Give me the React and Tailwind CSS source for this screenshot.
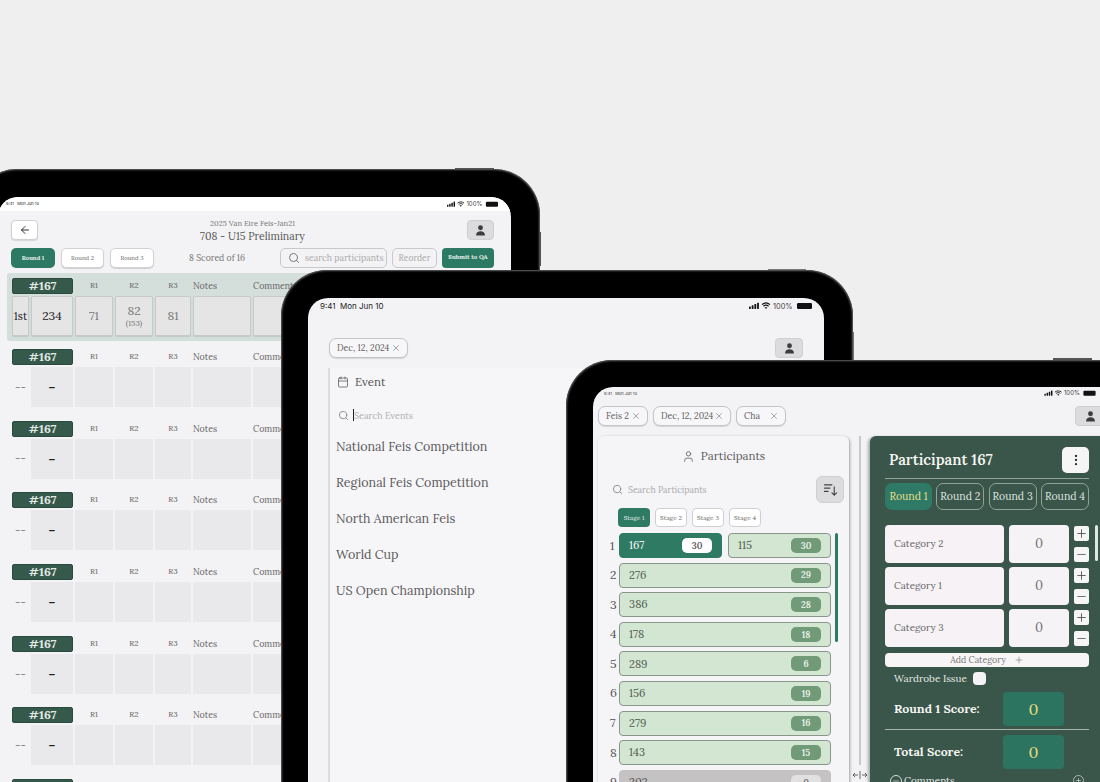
import { ArrowLeft, Calendar, EllipsisVertical, Minus, Plus, Search, User, X } from "lucide-react";

const SERIF = "font-['Lora','Liberation_Serif',serif]";
const SANS = "font-['Inter','Liberation_Sans',sans-serif]";

const EVENTS = [
  "National Feis Competition",
  "Regional Feis Competition",
  "North American Feis",
  "World Cup",
  "US Open Championship",
];

const PARTICIPANTS = [
  [276, 29],
  [386, 28],
  [178, 18],
  [289, 6],
  [156, 19],
  [279, 16],
  [143, 15],
];

function SolidUser({ className }) {
  return (
    <svg viewBox="0 0 16 16" className={className} fill="currentColor">
      <circle cx="8" cy="4.6" r="3" />
      <path d="M2.5 14c0-3.2 2.4-5 5.5-5s5.5 1.8 5.5 5z" />
    </svg>
  );
}

// signal, wifi, 100%, battery. size is set by the caller
function StatusIcons({ className }) {
  return (
    <svg viewBox="0 0 63 8" className={className} fill="#111">
      <rect x="0" y="4.500" width="1.800" height="2.500" rx="0.400" />
      <rect x="2.700" y="3.300" width="1.800" height="3.700" rx="0.400" />
      <rect x="5.400" y="2" width="1.800" height="5" rx="0.400" />
      <rect x="8.100" y="0.700" width="1.800" height="6.300" rx="0.400" />
      <path d="M13 2.600c2.400-2 5.600-2 8 0M14.400 4.200c1.600-1.300 3.600-1.300 5.200 0" fill="none" stroke="#111" strokeWidth="1.100" />
      <path d="M17 7l-1.300-1.500c.8-.5 1.800-.5 2.600 0z" />
      <text x="24" y="6.700" fontSize="7.400" fill="#444" fontFamily="Inter, sans-serif">100%</text>
      <rect x="48" y="1" width="15" height="6" rx="1.200" />
    </svg>
  );
}

function Chip({ label, wide }) {
  return (
    <div className={`flex h-5 items-center justify-between whitespace-nowrap rounded-[7px] border border-[#c4c4c8] bg-[#f7f6f8] pl-[7px] pr-[6px] text-[8.800px] text-[#5f5f5f] shadow-[0_1px_1px_rgba(0,0,0,0.12)] ${wide}`}>
      <span>{label}</span>
      <X className="h-[10px] w-[10px] text-[#77777c]" strokeWidth={1.500} />
    </div>
  );
}

function AvatarButton({ className }) {
  return (
    <div className={`flex h-5 shrink-0 items-center justify-center rounded-[4px] border border-[#cfcfd1] bg-[#dcdbde] text-[#3c3c3c] ${className}`}>
      <SolidUser className="h-[13px] w-[13px]" />
    </div>
  );
}

function ScoreGrid({ highlighted, first }) {
  const cell = highlighted
    ? "rounded-[2px] border border-[#c6cbc8] bg-[#e6e5e6] shadow-[0_1px_1px_rgba(0,0,0,0.1)]"
    : "bg-[#e9e8ea]";
  return (
    <div className="grid grid-cols-[17px_42px_38px_38px_36px_58px_60px] gap-x-[2px]">
      <div className="col-span-2 flex h-[16px] items-center justify-center rounded-[2px] border border-[#2a4a3d] bg-[#35594b] text-[12px] font-bold text-[#e3e9e4]">
        #167
      </div>
      <div className="text-center text-[8px] leading-[15px] text-[#666]">R1</div>
      <div className="text-center text-[8px] leading-[15px] text-[#666]">R2</div>
      <div className="text-center text-[8px] leading-[15px] text-[#666]">R3</div>
      <div className="text-[8.800px] leading-[15px] text-[#666]">Notes</div>
      <div className="whitespace-nowrap text-[8.800px] leading-[15px] text-[#666]">Comments</div>
      <div className={`mt-[2px] flex h-10 items-center justify-center text-[11px] ${first ? `${cell} text-[#222]` : "text-[#777]"}`}>
        {first ? "1st" : "--"}
      </div>
      <div className={`mt-[2px] flex h-10 items-center justify-center text-[12px] ${cell} ${first ? "text-[#222]" : "font-bold text-[#222]"}`}>
        {first ? "234" : "–"}
      </div>
      <div className={`mt-[2px] flex h-10 items-center justify-center text-[12px] text-[#777] ${cell}`}>{first ? "71" : ""}</div>
      <div className={`mt-[2px] flex h-10 flex-col items-center justify-center text-[12px] leading-[14px] text-[#777] ${cell}`}>
        {first ? "82" : ""}
        {first && <span className="text-[8px] leading-[10px]">(153)</span>}
      </div>
      <div className={`mt-[2px] flex h-10 items-center justify-center text-[12px] text-[#777] ${cell}`}>{first ? "81" : ""}</div>
      <div className={`mt-[2px] h-10 ${cell}`} />
      <div className={`mt-[2px] h-10 ${cell}`} />
    </div>
  );
}

function ScoresScreen() {
  const tabClass = "flex h-5 items-center justify-center rounded-[5px] border border-[#d2d2d4] bg-white text-[6px] text-[#666] shadow-[0_1px_1px_rgba(0,0,0,0.15)]";
  return (
    <div className={`h-full overflow-hidden rounded-t-[20px] bg-[#f3f2f4] ${SERIF}`}>
      <div className={`flex h-[14px] items-center justify-between bg-white pl-[8px] pr-[13px] text-[4px] text-[#222] ${SANS}`}>
        <span>9:41&nbsp;&nbsp;&nbsp;Mon Jun 10</span>
        <StatusIcons className="h-[6.500px] w-[51px]" />
      </div>
      <div className="pl-[13px] pr-[17px]">
        <div className="mt-[9px] flex h-5 items-start">
          <div className="flex h-5 w-[27px] items-center justify-center rounded-[4px] border border-[#d0d0d2] bg-white text-[#333] shadow-[0_1px_1px_rgba(0,0,0,0.12)]">
            <ArrowLeft className="h-[12px] w-[12px]" />
          </div>
          <div className="-mt-[2px] flex-1 text-center">
            <div className="text-[7.500px] leading-[10px] text-[#777]">2025 Van Eire Feis-Jan21</div>
            <div className="mt-[1px] text-[10.500px] leading-[15px] text-[#555]">708 - U15 Preliminary</div>
          </div>
          <AvatarButton className="w-[27px]" />
        </div>
        <div className="mt-[8px] flex h-5 items-center whitespace-nowrap">
          <div className="flex h-5 w-[44px] items-center justify-center rounded-[5px] bg-[#2c7a63] text-[6px] font-bold text-[#e6f0ea]">Round 1</div>
          <div className={`ml-[6px] w-[43px] ${tabClass}`}>Round 2</div>
          <div className={`ml-[6px] w-[44px] ${tabClass}`}>Round 3</div>
          <span className="ml-[35px] text-[8.700px] text-[#777]">8 Scored of 16</span>
          <div className="ml-auto flex h-5 w-[107px] items-center rounded-[5px] border border-[#c8c8cb] pl-[7px] text-[8.800px] text-[#aaa]">
            <Search className="mr-[5px] h-[12px] w-[12px] text-[#777]" />
            <span>search participants</span>
          </div>
          <div className="ml-[5px] flex h-5 w-[45px] items-center justify-center rounded-[5px] border border-[#c8c8cb] text-[8.500px] text-[#aaa]">Reorder</div>
          <div className="ml-[5px] flex h-5 w-[52px] items-center justify-center rounded-[4px] bg-[#2c7a63] text-[6.200px] font-bold text-[#e6f0ea]">Submit to QA</div>
        </div>
        <div className="-ml-[4px] mt-[5px] rounded-[3px] bg-[#d4dedb] py-[5px] pl-[5px]">
          <ScoreGrid highlighted first />
        </div>
        <div className="mt-[8px] flex flex-col gap-y-[13.700px] pl-px">
          {[0, 1, 2, 3, 4, 5, 6].map((n) => (
            <ScoreGrid key={n} />
          ))}
        </div>
      </div>
    </div>
  );
}

function EventScreen() {
  return (
    <div className={`h-full overflow-hidden rounded-t-[20px] bg-[#f3f2f5] ${SERIF}`}>
      <div className={`flex h-[15px] items-center justify-between pl-[12px] pr-[12px] pt-[1px] text-[8px] text-[#222] ${SANS}`}>
        <span>9:41&nbsp;&nbsp;Mon Jun 10</span>
        <StatusIcons className="h-[8px] w-[63px]" />
      </div>
      <div className="mt-[25px] flex items-center justify-between pl-[21px] pr-[21px]">
        <Chip label="Dec, 12, 2024" wide="w-[79px]" />
        <AvatarButton className="w-[28px]" />
      </div>
      <div className="ml-[20px] mt-[10px] h-[500px] border-l-2 border-[#dcdbde] bg-[#f6f5f8] pl-[7px]">
        <div className="flex items-center pt-[5px] text-[#555]">
          <Calendar className="h-[12px] w-[12px]" strokeWidth={1.500} />
          <span className="ml-[6px] text-[11.500px]">Event</span>
        </div>
        <div className="mt-[18px] flex h-[14px] items-center text-[9px] text-[#b0b0b2]">
          <Search className="ml-px h-[11px] w-[11px] text-[#8a8a8d]" />
          <span className="ml-[4px] h-[12px] w-px bg-[#222]" />
          <span>Search Events</span>
        </div>
        <div className="-ml-px mt-[6px] flex flex-col">
          {EVENTS.map((name) => (
            <div key={name} className="h-9 text-[12.500px] leading-[36px] text-[#5a5a5a]">
              {name}
            </div>
          ))}
        </div>
      </div>
    </div>
  );
}

function ParticipantCard({ id, score, active, grey, className }) {
  const box = active
    ? "bg-[#2f7a63] border-[#2f7a63] text-white"
    : grey
      ? "bg-[#c4c2c3] border-[#c4c2c3] text-[#555]"
      : "bg-[#d3e6d2] border-[#8a958c] text-[#4f5a50]";
  const pill = active
    ? "bg-white text-[#555] font-normal"
    : grey
      ? "bg-[#e2e1e2] text-[#666]"
      : "bg-[#709a78] text-[#eef5ec]";
  return (
    <div className={`flex h-[25px] items-center justify-between rounded-[4px] border pl-[9px] pr-[9px] text-[11px] ${box} ${className}`}>
      <span>{id}</span>
      <span className={`flex h-[15px] w-[30px] items-center justify-center rounded-[5px] text-[9px] font-semibold ${pill}`}>{score}</span>
    </div>
  );
}

function CategoryRow({ name }) {
  return (
    <div className="flex h-[38px] gap-x-[5px]">
      <div className="flex w-[119px] items-center rounded-[4px] bg-[#f7f2f5] pl-[9px] text-[9.800px] text-[#666]">{name}</div>
      <div className="flex w-[60px] items-center justify-center rounded-[4px] bg-[#f5f3f5] text-[13px] text-[#777]">0</div>
      <div className="flex flex-col justify-between py-[1px]">
        <div className="flex h-[15px] w-[15px] items-center justify-center rounded-[2px] bg-[#f7f6f7] text-[#444]">
          <Plus className="h-[13px] w-[13px]" strokeWidth={1.500} />
        </div>
        <div className="flex h-[15px] w-[15px] items-center justify-center rounded-[2px] bg-[#f7f6f7] text-[#555]">
          <Minus className="h-[13px] w-[13px]" strokeWidth={1.500} />
        </div>
      </div>
    </div>
  );
}

function ScoringPanel() {
  const round = "flex h-[27px] w-[48px] items-center justify-center rounded-[7px] border border-[#8fa398] text-[10.500px] text-[#dfe6e0]";
  return (
    <div className="relative h-[400px] w-[260px] rounded-[6px] bg-[#3a5549] pl-[15px] shadow-[-2px_1px_3px_rgba(0,0,0,0.3)]">
      <div className="flex h-[42px] w-[204px] items-center justify-between pl-[4px] pt-[6px]">
        <span className="text-[14.800px] font-semibold text-[#f4f5f2]">Participant 167</span>
        <div className="flex h-[26px] w-[27px] items-center justify-center rounded-[5px] bg-[#f6f5f6] text-[#333]">
          <EllipsisVertical className="h-[14px] w-[14px]" />
        </div>
      </div>
      <div className="h-px w-[204px] bg-[#8fa398]" />
      <div className="mt-[4px] flex w-[204px] justify-between">
        <div className="flex h-[27px] w-[47px] items-center justify-center rounded-[7px] bg-[#2f7a66] text-[10.500px] text-[#eadf86]">Round 1</div>
        <div className={round}>Round 2</div>
        <div className={round}>Round 3</div>
        <div className={round}>Round 4</div>
      </div>
      <div className="mt-[15px] flex flex-col gap-y-[4px]">
        <CategoryRow name="Category 2" />
        <CategoryRow name="Category 1" />
        <CategoryRow name="Category 3" />
      </div>
      <div className="mt-[6px] flex h-[14px] w-[204px] items-center justify-center rounded-[4px] bg-[#f8f5f7] text-[8.800px] text-[#777]">
        Add Category
        <Plus className="ml-[8px] h-[10px] w-[10px]" strokeWidth={1.500} />
      </div>
      <div className="mt-[4px] flex h-[14px] items-center pl-[9px] text-[10px] text-[#e4e9e4]">
        Wardrobe Issue
        <span className="ml-[6px] h-[13px] w-[13px] rounded-[4px] bg-[#f4f2f5]" />
      </div>
      <div className="mt-[7px] flex h-[34px] w-[179px] items-center justify-between">
        <span className="pl-[9px] text-[12.300px] font-bold text-[#f2f4f0]">Round 1 Score:</span>
        <span className="flex h-[34px] w-[61px] items-center justify-center rounded-[4px] bg-[#2c7460] text-[16px] text-[#e3d97c]">0</span>
      </div>
      <div className="mt-[3px] h-px w-[204px] bg-[#a5b5ab]" />
      <div className="mt-[5px] flex h-[34px] w-[179px] items-center justify-between">
        <span className="pl-[9px] text-[12.300px] font-bold text-[#f2f4f0]">Total Score:</span>
        <span className="flex h-[34px] w-[61px] items-center justify-center rounded-[4px] bg-[#2c7460] text-[16px] text-[#e3d97c]">0</span>
      </div>
      <div className="mt-[4px] flex w-[199px] items-center justify-between pl-[5px] text-[10px] text-[#e4e9e4]">
        <span className="flex items-center gap-x-[2px]">
          <span className="flex h-[12px] w-[12px] items-center justify-center rounded-full border border-[#d5ddd7]">
            <Minus className="h-[8px] w-[8px]" />
          </span>
          Comments
        </span>
        <span className="flex h-[11px] w-[11px] items-center justify-center rounded-full border border-[#a9b7ae]">
          <Plus className="h-[7px] w-[7px]" />
        </span>
      </div>
      <div className="absolute left-[225px] top-[89px] h-[36px] w-[3px] rounded-full bg-[#dfe9e1]" />
    </div>
  );
}

function ParticipantsScreen() {
  const stage = "flex h-[19px] w-[32px] items-center justify-center rounded-[4px] border border-[#cfcfd3] bg-white text-[6.500px] text-[#666]";
  return (
    <div className={`h-full overflow-hidden rounded-t-[20px] bg-[#f3f2f5] ${SERIF}`}>
      <div className={`flex h-[14px] items-center justify-between pl-[11px] pr-[4px] text-[4px] text-[#333] ${SANS}`}>
        <span>9:41&nbsp;&nbsp;&nbsp;Mon Jun 10</span>
      </div>
      <div className="mt-[5px] flex items-center gap-x-[5px] pl-[5px]">
        <Chip label="Feis 2" wide="w-[50px]" />
        <Chip label="Dec, 12, 2024" wide="w-[78px]" />
        <Chip label="Cha" wide="w-[50px]" />
        <AvatarButton className="ml-[284px] w-[30px]" />
      </div>
      <div className="mt-[10px] flex items-start pl-[5px]">
        <div className="h-[400px] w-[251px] rounded-[6px] bg-[#f5f4f7] shadow-[1px_1px_3px_rgba(0,0,0,0.35)]">
          <div className="flex h-[40px] items-center justify-center text-[11.500px] text-[#5c5c5c]">
            <User className="mr-[6px] h-[13px] w-[13px]" strokeWidth={1.500} />
            Participants
          </div>
          <div className="flex items-center pl-[14px] pr-[5px]">
            <Search className="h-[11px] w-[11px] text-[#8a8a8d]" />
            <span className="ml-[5px] text-[8.700px] text-[#aaa]">Search Participants</span>
            <div className="ml-auto flex h-[27px] w-[28px] items-center justify-center rounded-[6px] border border-[#cfcfd2] bg-[#dcdbde] text-[#444]">
              <svg viewBox="0 0 16 16" className="h-[15px] w-[15px]" fill="none" stroke="currentColor" strokeWidth="1.200" strokeLinecap="round" strokeLinejoin="round">
                <path d="M1.500 3h8M1.500 6.500h6M1.500 10h4" />
                <path d="M12 5v9M9.500 11.500L12 14l2.500-2.500" />
              </svg>
            </div>
          </div>
          <div className="mt-[5px] flex gap-x-[5px] pl-[20px]">
            <div className="flex h-[19px] w-[32px] items-center justify-center rounded-[4px] bg-[#2f7a63] text-[6.500px] text-[#e6f0ea]">Stage 1</div>
            <div className={stage}>Stage 2</div>
            <div className={stage}>Stage 3</div>
            <div className={stage}>Stage 4</div>
          </div>
          <div className="relative mt-[6px] flex flex-col gap-y-[4.600px] pl-[12px]">
            <div className="flex items-center">
              <span className="w-[9px] text-[12px] text-[#555]">1</span>
              <ParticipantCard id={167} score={30} active className="w-[103px]" />
              <ParticipantCard id={115} score={30} className="ml-[6px] w-[103px]" />
            </div>
            {PARTICIPANTS.map(([id, score], i) => (
              <div key={id} className="flex items-center">
                <span className="w-[9px] text-[12px] text-[#555]">{i + 2}</span>
                <ParticipantCard id={id} score={score} className="w-[212px]" />
              </div>
            ))}
            <div className="flex items-center">
              <span className="w-[9px] text-[12px] text-[#555]">9</span>
              <ParticipantCard id={202} score={0} grey className="w-[212px]" />
            </div>
            <div className="absolute left-[237px] top-0 h-[109px] w-[3px] rounded-full bg-[#2f7a63]" />
          </div>
        </div>
        <div className="flex w-[21px] flex-col items-center">
          <div className="h-[329px] w-[2px] bg-[#c9c9cb]" />
          <svg viewBox="0 0 16 8" className="mt-[6px] h-[8px] w-[16px]" fill="none" stroke="#555" strokeWidth="0.900">
            <path d="M8 0v8M1 4h5M1 4l2-2M1 4l2 2M10 4h5M15 4l-2-2M15 4l-2 2" />
          </svg>
        </div>
        <ScoringPanel />
      </div>
    </div>
  );
}

function Tablet({ className, children }) {
  return (
    <div className={`absolute rounded-[46px] bg-black shadow-[inset_0_0_2px_1px_#666] ${className}`}>
      {children}
    </div>
  );
}

export default function App() {
  return (
    <div className="relative h-[782px] w-[1100px] overflow-hidden bg-[#efefef]">
      <div className="absolute left-[455px] top-[168px] h-[2px] w-[39px] bg-[#555]" />
      <div className="absolute left-[540px] top-[232px] h-[34px] w-[1px] bg-[#555]" />
      <Tablet className="-left-[29px] top-[169px] h-[700px] w-[569px] pl-[27px] pr-[29px] pt-[28px]">
        <ScoresScreen />
      </Tablet>
      <div className="absolute left-[768px] top-[269px] h-[2px] w-[38px] bg-[#777]" />
      <div className="absolute left-[853px] top-[332px] h-[34px] w-[1px] bg-[#777]" />
      <Tablet className="left-[281px] top-[270px] h-[600px] w-[572px] pl-[27px] pr-[29px] pt-[28px]">
        <EventScreen />
      </Tablet>
      <div className="absolute left-[1053px] top-[358px] h-[2px] w-[39px] bg-[#555]" />
      <Tablet className="left-[566px] top-[360px] h-[500px] w-[700px] pl-[27px] pr-[29px] pt-[27px]">
        <ParticipantsScreen />
        <StatusIcons className="absolute left-[478px] top-[30px] h-[6.500px] w-[52px]" />
      </Tablet>
    </div>
  );
}
